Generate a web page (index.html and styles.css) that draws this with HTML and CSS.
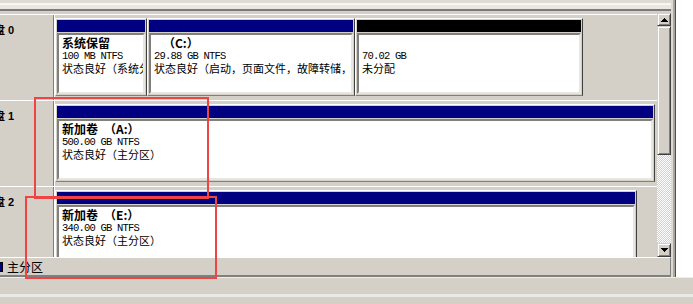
FILE: index.html
```html
<!DOCTYPE html>
<html lang="zh-CN">
<head>
<meta charset="utf-8">
<title>磁盘管理</title>
<link rel="stylesheet" href="styles.css">
</head>
<body>
<div class="main">
  <div class="pane">
    <div class="topband"></div>
    <div class="view">
      <div class="disks-clip">
        <div class="disks">
          <div class="disk">
            <div class="disk-label">磁盘 0</div>
            <div class="parts">
              <div class="part w-sys">
                <div class="part-head"></div>
                <div class="part-body">
                  <div class="p-name">系统保留</div>
                  <div class="p-size">100 MB NTFS</div>
                  <div class="p-status">状态良好（系统分区，活动，主分区）</div>
                </div>
              </div>
              <div class="part w-c">
                <div class="part-head"></div>
                <div class="part-body">
                  <div class="p-name"><span class="drive-only">（C:）</span></div>
                  <div class="p-size">29.88 GB NTFS</div>
                  <div class="p-status">状态良好（启动，页面文件，故障转储，主分区）</div>
                </div>
              </div>
              <div class="part w-free">
                <div class="part-head free"></div>
                <div class="part-body">
                  <div class="p-name">&nbsp;</div>
                  <div class="p-size">70.02 GB</div>
                  <div class="p-status">未分配</div>
                </div>
              </div>
            </div>
          </div>
          <div class="disk">
            <div class="disk-label">磁盘 1</div>
            <div class="parts">
              <div class="part w-a">
                <div class="part-head"></div>
                <div class="part-body">
                  <div class="p-name">新加卷　（A:）</div>
                  <div class="p-size">500.00 GB NTFS</div>
                  <div class="p-status">状态良好（主分区）</div>
                </div>
              </div>
            </div>
          </div>
          <div class="disk">
            <div class="disk-label">磁盘 2</div>
            <div class="parts">
              <div class="part w-e">
                <div class="part-head"></div>
                <div class="part-body">
                  <div class="p-name">新加卷　（E:）</div>
                  <div class="p-size">340.00 GB NTFS</div>
                  <div class="p-status">状态良好（主分区）</div>
                </div>
              </div>
            </div>
          </div>
        </div>
      </div>
      <div class="scrollbar">
        <div class="sb-btn sb-up">
          <svg width="7" height="4" viewBox="0 0 7 4" shape-rendering="crispEdges"><rect x="3" y="0" width="1" height="1"/><rect x="2" y="1" width="3" height="1"/><rect x="1" y="2" width="5" height="1"/><rect x="0" y="3" width="7" height="1"/></svg>
        </div>
        <div class="sb-btn sb-thumb"></div>
        <div class="sb-track"></div>
        <div class="sb-btn sb-down">
          <svg width="7" height="4" viewBox="0 0 7 4" shape-rendering="crispEdges"><rect x="0" y="0" width="7" height="1"/><rect x="1" y="1" width="5" height="1"/><rect x="2" y="2" width="3" height="1"/><rect x="3" y="3" width="1" height="1"/></svg>
        </div>
      </div>
    </div>
    <div class="legend"><span class="legend-sw"></span><span class="legend-text">主分区</span></div>
  </div>
  <div class="edge"></div>
  <div class="blank"></div>
</div>
<div class="status"><div class="status-line"></div></div>
<div class="mark mark-a"></div>
<div class="mark mark-b"></div>
</body>
</html>
```
FILE: styles.css
```css
* { box-sizing: border-box; }
html, body { margin: 0; padding: 0; }
body {
  width: 693px;
  height: 304px;
  overflow: hidden;
  position: relative;
  background: #d4d0c8;
  color: #000;
  font-family: "Noto Sans CJK SC", sans-serif;
}
.main { display: flex; height: 277px; }
.pane { width: 671px; flex: none; display: flex; flex-direction: column; }
.topband {
  height: 9px;
  background: linear-gradient(#dedbd4 0 3px, #f7f6f2 3px 5px, #e9e7e2 5px);
}
.view {
  display: flex;
  height: 248px;
  border-top: 2px solid #7d7b76;
  overflow: hidden;
}
.disks-clip { width: 657px; flex: none; overflow: hidden; padding-top: 3px; }
.disks { margin-left: -21px; }
.disk { display: flex; height: 86px; border-top: 1px solid #fff; }
.disk-label {
  width: 75px;
  flex: none;
  border-right: 1px solid #808080;
  padding: 8px 0 0 4px;
  font-family: "Liberation Sans", "Noto Sans CJK SC", sans-serif;
  font-weight: 700;
  font-size: 11px;
  line-height: 14px;
  white-space: nowrap;
  overflow: hidden;
}
.parts {
  display: flex;
  align-items: flex-start;
  padding-top: 3px;
  border-left: 1px solid #fff;
}
.part {
  height: 78px;
  flex: none;
  display: flex;
  flex-direction: column;
  padding: 1px;
  background: #d4d0c8;
  border: 1px solid;
  border-color: #fff #404040 #808080 #fff;
}
.w-sys { width: 92px; }
.w-c { width: 208px; }
.w-free { width: 228px; }
.w-a { width: 600px; }
.w-e { width: 582px; }
.part-head { height: 12px; flex: none; background: #000080; }
.part-head.free { background: #000; }
.part-body {
  flex: 1;
  margin-top: 1px;
  background: #fff;
  border: 2px solid;
  border-color: #808080 #e8e6e0 #e8e6e0 #808080;
  padding: 1px 0 0 3px;
  overflow: hidden;
  white-space: nowrap;
}
.p-name { font-weight: 700; font-size: 12px; line-height: 14px; }
.drive-only { margin-left: 9px; }
.p-size {
  font-family: "Liberation Mono", monospace;
  font-size: 10.5px;
  letter-spacing: -0.8px;
  line-height: 12px;
}
.p-status { font-size: 11px; line-height: 13px; }

.scrollbar { width: 14px; flex: none; margin-top: 2px; display: flex; flex-direction: column; }
.sb-btn {
  background: #d4d0c8;
  border: 1px solid;
  border-color: #d4d0c8 #404040 #404040 #d4d0c8;
  box-shadow: inset 1px 1px #fff, inset -1px -1px #808080;
  display: flex;
  align-items: center;
  justify-content: center;
}
.sb-btn svg { display: block; fill: #000; }
.sb-up { height: 13px; }
.sb-thumb { height: 129px; }
.sb-track {
  flex: 1;
  background: repeating-conic-gradient(#d4d0c8 0 25%, #fff 0 50%) 0 0 / 2px 2px;
}
.sb-down { height: 14px; }

.legend {
  height: 20px;
  display: flex;
  align-items: center;
  padding-top: 1px;
  border-top: 1px solid #fff;
  border-bottom: 2px solid #808080;
  border-right: 1px solid #808080;
  overflow: hidden;
  font-size: 12px;
  line-height: 14px;
}
.legend-sw {
  width: 10px;
  height: 10px;
  flex: none;
  margin: 0 4px 0 -7px;
  background: #000080;
  border: 1px solid #000;
}
.edge {
  width: 6px;
  flex: none;
  background: linear-gradient(to right, #dedbd5 0 2px, #a8a6a0 2px 4px, #505050 4px 5px, #fff 5px);
}
.blank { flex: 1; background: #fff; }
.status { height: 27px; border-top: 1px solid #efede8; padding-top: 16px; }
.status-line { height: 3px; background: #ebe9e4; }

.mark { position: absolute; border: 2px solid #f04444; }
.mark-a { left: 34px; top: 97px; width: 175px; height: 102px; }
.mark-b { left: 25px; top: 196px; width: 192px; height: 83px; }
```
